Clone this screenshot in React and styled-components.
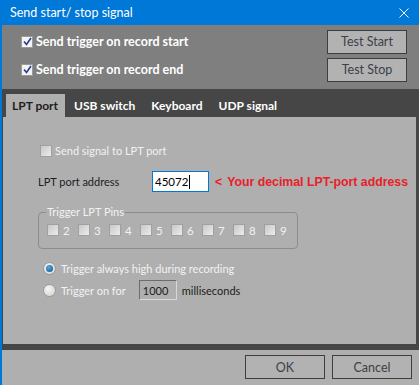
import React from 'react';
import styled, { createGlobalStyle } from 'styled-components';

const GlobalStyle = createGlobalStyle`
  html, body { margin: 0; padding: 0; }
  body {
    width: 419px;
    height: 385px;
    overflow: hidden;
    font-family: Lato, "Noto Sans", sans-serif;
    font-size: 11px;
  }
`;

const Window = styled.div`
  width: 419px;
  height: 385px;
  display: flex;
  flex-direction: column;
`;

const TitleBar = styled.div`
  height: 25px;
  flex-shrink: 0;
  background: #0078d7;
  color: #fff;
  display: flex;
  align-items: center;
  justify-content: space-between;
  padding: 0 10px 0 10px;
  font-size: 12.5px;
`;

const Body = styled.div`
  flex: 1;
  display: flex;
  flex-direction: column;
  border-left: 2px solid #0078d7;
`;

const TopSection = styled.div`
  height: 64px;
  box-sizing: border-box;
  background: #7f7f7f;
  padding: 5px 12px 0 19px;
  display: flex;
  flex-direction: column;
  gap: 5px;
`;

const TopRow = styled.div`
  height: 23px;
  display: flex;
  align-items: center;
  justify-content: space-between;
`;

const CheckLabel = styled.label`
  display: flex;
  align-items: center;
  gap: 3px;
  white-space: nowrap;
  color: ${({ color }) => color || '#fff'};
  font-weight: ${({ bold }) => (bold ? 700 : 400)};
  font-size: ${({ bold }) => (bold ? 12.5 : 11)}px;
`;

const Box = styled.span`
  width: 12px;
  height: 12px;
  box-sizing: border-box;
  flex-shrink: 0;
  border: 1px solid ${({ checked }) => (checked ? '#9a9a9a' : '#a0a0a0')};
  background: ${({ checked }) =>
    checked
      ? '#f4f4f4'
      : 'linear-gradient(135deg, #c8c8c8 0%, #ececec 100%)'};
  display: flex;
  align-items: center;
  justify-content: center;
`;

const Button = styled.div`
  width: 80px;
  height: 24px;
  box-sizing: border-box;
  border: 1px solid #3e3e3e;
  background: #b2b2b2;
  color: #3c4048;
  display: flex;
  align-items: center;
  justify-content: center;
  font-size: 12.5px;
`;

const TabFrame = styled.div`
  flex: 1;
  background: #464646;
  display: flex;
  flex-direction: column;
  padding: 0 3px 3px 1px;
`;

const TabStrip = styled.div`
  height: 28px;
  display: flex;
  align-items: flex-end;
  padding-left: 3px;
`;

const Tab = styled.div`
  height: 23px;
  display: flex;
  align-items: center;
  padding: 0 7px 0 ${({ first }) => (first ? 6 : 9)}px;
  font-weight: 700;
  font-size: 12px;
  color: ${({ active }) => (active ? '#1e1e1e' : '#fff')};
  background: ${({ active }) => (active ? '#afafaf' : 'transparent')};
`;

const Panel = styled.div`
  flex: 1;
  background: #afafaf;
  padding: 27px 0 0 35px;
  display: flex;
  flex-direction: column;
  align-items: flex-start;
`;

const Row = styled.div`
  display: flex;
  align-items: center;
  white-space: nowrap;
  margin-left: ${({ indent }) => indent || 0}px;
  margin-top: ${({ top }) => top || 0}px;
`;

const DarkText = styled.span`
  color: #1c1c1c;
  width: ${({ w }) => (w ? `${w}px` : 'auto')};
  margin-left: ${({ ml }) => ml || 0}px;
`;

const LightText = styled.span`
  color: #f2f2f2;
`;

const AddressInput = styled.div`
  width: 57px;
  height: 21px;
  box-sizing: border-box;
  border: 1px solid #0078d7;
  background: #fff;
  color: #000;
  display: flex;
  align-items: center;
  padding-left: 2px;
  font-size: 11.5px;
`;

const Caret = styled.span`
  display: inline-block;
  width: 1px;
  height: 14px;
  background: #000;
  margin-left: 1px;
`;

const Hint = styled.span`
  color: #e8202a;
  font-family: "Liberation Sans", Arial, sans-serif;
  font-weight: 700;
  font-size: 12.3px;
  margin-left: 6px;
  display: flex;
  gap: 5px;
`;

const Group = styled.fieldset`
  margin: 14px 0 0 0;
  width: 260px;
  box-sizing: border-box;
  border: 1px solid #8c8c8c;
  border-radius: 4px;
  padding: 5px 0 11px 8px;
`;

const Legend = styled.legend`
  color: #f2f2f2;
  padding: 0 1px;
  margin-left: -1px;
  line-height: 12px;
`;

const Pins = styled.div`
  display: flex;
  height: 14px;
  align-items: center;
`;

const Pin = styled.label`
  width: 31px;
  display: flex;
  align-items: center;
  gap: 4px;
  color: #f2f2f2;
  font-size: 11.5px;
`;

const Radio = styled.span`
  width: 13px;
  height: 13px;
  box-sizing: border-box;
  border-radius: 50%;
  border: 1px solid #9a9a9a;
  background: radial-gradient(circle at 40% 35%, #f6f6f6, #cfcfcf);
  display: flex;
  align-items: center;
  justify-content: center;
  margin-right: 5px;
  &::after {
    content: '';
    display: ${({ checked }) => (checked ? 'block' : 'none')};
    width: 7px;
    height: 7px;
    border-radius: 50%;
    background: radial-gradient(circle at 40% 35%, #5aa8e0, #0a4f8a);
  }
`;

const TimeInput = styled.div`
  width: 38px;
  height: 20px;
  box-sizing: border-box;
  border: 1px solid #6c6c6c;
  border-right-color: #d8d8d8;
  border-bottom-color: #d8d8d8;
  color: #1c1c1c;
  display: flex;
  align-items: center;
  padding-left: 3px;
  margin-left: 13px;
`;

const Divider = styled.div`
  height: 3px;
  background: #464646;
`;

const Footer = styled.div`
  height: 35px;
  flex-shrink: 0;
  background: #afafaf;
  display: flex;
  justify-content: flex-end;
  align-items: flex-start;
  gap: 7px;
  padding: 5px 7px 0 0;
  box-sizing: border-box;
`;

const Check = ({ checked }) => (
  <Box checked={checked}>
    {checked && (
      <svg width="9" height="9" viewBox="0 0 9 9">
        <path d="M1 4.5 L3.5 7.5 L8 1" fill="none" stroke="#2a3a8c" strokeWidth="1.6" />
      </svg>
    )}
  </Box>
);

export default function App() {
  return (
    <>
      <GlobalStyle />
      <Window>
        <TitleBar>
          <span>Send start/ stop signal</span>
          <svg width="10" height="10" viewBox="0 0 10 10">
            <path d="M0.5 0.5 L9.5 9.5 M9.5 0.5 L0.5 9.5" stroke="#fff" strokeWidth="1" />
          </svg>
        </TitleBar>
        <Body>
          <TopSection>
            <TopRow>
              <CheckLabel bold>
                <Check checked /> Send trigger on record start
              </CheckLabel>
              <Button>Test Start</Button>
            </TopRow>
            <TopRow>
              <CheckLabel bold>
                <Check checked /> Send trigger on record end
              </CheckLabel>
              <Button>Test Stop</Button>
            </TopRow>
          </TopSection>
          <TabFrame>
            <TabStrip>
              <Tab active first>LPT port</Tab>
              <Tab>USB switch</Tab>
              <Tab>Keyboard</Tab>
              <Tab>UDP signal</Tab>
            </TabStrip>
            <Panel>
              <Row indent={2}>
                <CheckLabel color="#f2f2f2">
                  <Check /> Send signal to LPT port
                </CheckLabel>
              </Row>
              <Row top={14}>
                <DarkText w={114}>LPT port address</DarkText>
                <AddressInput>
                  45072<Caret />
                </AddressInput>
                <Hint>
                  <span>&lt;</span>
                  <span>Your decimal LPT-port address</span>
                </Hint>
              </Row>
              <Group>
                <Legend>Trigger LPT Pins</Legend>
                <Pins>
                  {[2, 3, 4, 5, 6, 7, 8, 9].map((n) => (
                    <Pin key={n}>
                      <Check />
                      {n}
                    </Pin>
                  ))}
                </Pins>
              </Group>
              <Row indent={5} top={13}>
                <Radio checked />
                <LightText>Trigger always high during recording</LightText>
              </Row>
              <Row indent={5} top={5}>
                <Radio />
                <LightText>Trigger on for</LightText>
                <TimeInput>1000</TimeInput>
                <DarkText ml={5}>milliseconds</DarkText>
              </Row>
            </Panel>
            <Divider />
          </TabFrame>
          <Footer>
            <Button>OK</Button>
            <Button>Cancel</Button>
          </Footer>
        </Body>
      </Window>
    </>
  );
}
